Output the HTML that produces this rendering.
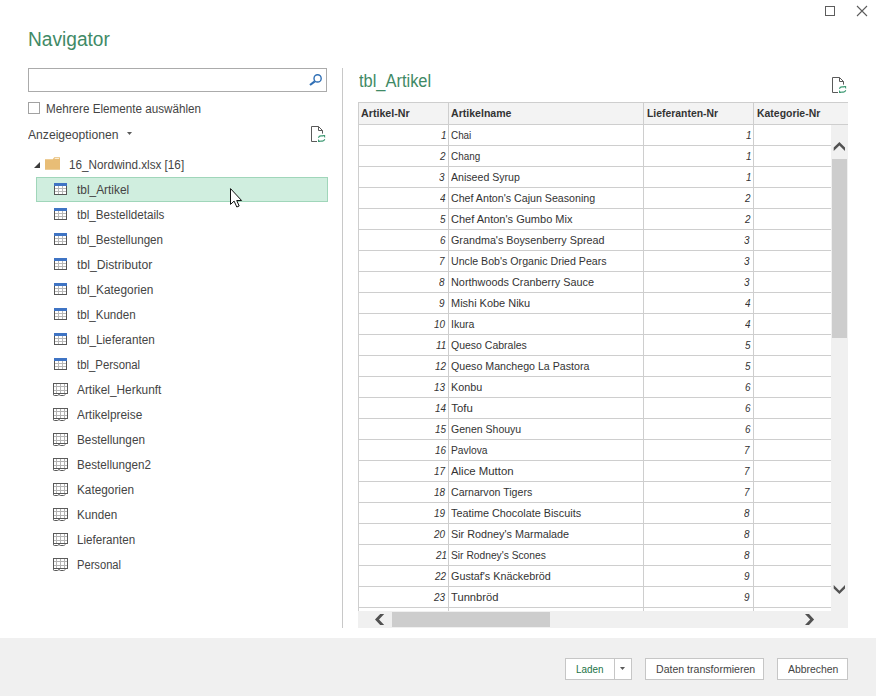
<!DOCTYPE html>
<html><head><meta charset="utf-8"><title>Navigator</title>
<style>
html,body{margin:0;padding:0;}
body{width:876px;height:696px;position:relative;overflow:hidden;background:#fff;font-family:"Liberation Sans",sans-serif;}
.t{position:absolute;white-space:nowrap;line-height:1;display:block;}
.b{position:absolute;box-sizing:border-box;}
svg{position:absolute;overflow:visible;}
</style></head>
<body>
<div class="b" style="left:0;top:638px;width:876px;height:58px;background:#f0f0f0;"></div>
<div class="b" style="left:825px;top:6px;width:10px;height:10px;border:1px solid #5c5c5c;"></div>
<svg style="left:857px;top:6px;" width="10" height="10"><path d="M0,0 L10,10 M10,0 L0,10" stroke="#5c5c5c" stroke-width="1.1" fill="none"/></svg>
<div class="b" style="left:28px;top:68px;width:299px;height:24px;border:1px solid #ababab;background:#fff;"></div>
<svg style="left:305px;top:72px;" width="20" height="18"><circle cx="12.6" cy="6.4" r="3.6" stroke="#2f6fb5" stroke-width="1.4" fill="none"/><path d="M9.8,9.3 L5.0,13.0" stroke="#2f6fb5" stroke-width="2.2" fill="none"/></svg>
<div class="b" style="left:28px;top:102px;width:12px;height:12px;border:1px solid #a2a2a2;background:#fff;"></div>
<svg style="left:127px;top:132px;" width="5" height="3"><path d="M0,0 L5,0 L2.5,3 Z" fill="#5a5a5a"/></svg>
<svg style="left:311px;top:126px;" width="16" height="18"><path d="M6,15.5 L0.5,15.5 L0.5,0.5 L7.5,0.5 L11.5,4.5 L11.5,7.6 M7.5,0.5 L7.5,4.5 L11.5,4.5" stroke="#5a5a5a" stroke-width="1" fill="none"/><path d="M7.4,11.7 Q8.0,10.0 9.8,9.9 L12.0,9.9" stroke="#3f9a74" stroke-width="1.1" fill="none"/><path d="M11.3,8.9 L14.1,8.9 L14.1,11.9 Z" fill="#3f9a74"/><path d="M13.8,13.3 Q13.2,15.0 11.4,15.1 L9.2,15.1" stroke="#3f9a74" stroke-width="1.1" fill="none"/><path d="M7.0,13.1 L7.0,16.0 L9.9,16.0 Z" fill="#3f9a74"/></svg>
<svg style="left:832px;top:77px;" width="16" height="18"><path d="M6,15.5 L0.5,15.5 L0.5,0.5 L7.5,0.5 L11.5,4.5 L11.5,7.6 M7.5,0.5 L7.5,4.5 L11.5,4.5" stroke="#5a5a5a" stroke-width="1" fill="none"/><path d="M7.4,11.7 Q8.0,10.0 9.8,9.9 L12.0,9.9" stroke="#3f9a74" stroke-width="1.1" fill="none"/><path d="M11.3,8.9 L14.1,8.9 L14.1,11.9 Z" fill="#3f9a74"/><path d="M13.8,13.3 Q13.2,15.0 11.4,15.1 L9.2,15.1" stroke="#3f9a74" stroke-width="1.1" fill="none"/><path d="M7.0,13.1 L7.0,16.0 L9.9,16.0 Z" fill="#3f9a74"/></svg>
<div class="b" style="left:342px;top:68px;width:1px;height:560px;background:#c8c8c8;"></div>
<svg style="left:34px;top:162px;" width="6" height="6"><path d="M6,0 L6,6 L0,6 Z" fill="#3c3c3c"/></svg>
<svg style="left:45px;top:157px;" width="16" height="14"><path d="M0,2.3 L7.8,2.3 L9.2,0.2 L14.6,0.2 L15,0.6 L15,12.8 L0,12.8 Z" fill="#e8bd76"/><rect x="9.7" y="1.0" width="4.4" height="0.9" fill="#fdf3df"/></svg>
<div class="b" style="left:36px;top:177px;width:292px;height:25px;background:#d0eedf;border:1px solid #a0d6ba;"></div>
<svg style="left:54px;top:183.0px;" width="13" height="12" shape-rendering="crispEdges"><rect x="0" y="0" width="13" height="12" fill="#b8b8b8"/><rect x="1" y="3" width="3" height="2" fill="#fff"/><rect x="5" y="3" width="3" height="2" fill="#fff"/><rect x="9" y="3" width="3" height="2" fill="#fff"/><rect x="1" y="6" width="3" height="2" fill="#fff"/><rect x="5" y="6" width="3" height="2" fill="#fff"/><rect x="9" y="6" width="3" height="2" fill="#fff"/><rect x="1" y="9" width="3" height="2" fill="#fff"/><rect x="5" y="9" width="3" height="2" fill="#fff"/><rect x="9" y="9" width="3" height="2" fill="#fff"/><rect x="0" y="0" width="13" height="3" fill="#3f74c4"/><rect x="0" y="3" width="1" height="9" fill="#565656"/><rect x="12" y="3" width="1" height="9" fill="#565656"/><rect x="0" y="11" width="13" height="1" fill="#565656"/></svg>
<svg style="left:54px;top:208.0px;" width="13" height="12" shape-rendering="crispEdges"><rect x="0" y="0" width="13" height="12" fill="#b8b8b8"/><rect x="1" y="3" width="3" height="2" fill="#fff"/><rect x="5" y="3" width="3" height="2" fill="#fff"/><rect x="9" y="3" width="3" height="2" fill="#fff"/><rect x="1" y="6" width="3" height="2" fill="#fff"/><rect x="5" y="6" width="3" height="2" fill="#fff"/><rect x="9" y="6" width="3" height="2" fill="#fff"/><rect x="1" y="9" width="3" height="2" fill="#fff"/><rect x="5" y="9" width="3" height="2" fill="#fff"/><rect x="9" y="9" width="3" height="2" fill="#fff"/><rect x="0" y="0" width="13" height="3" fill="#3f74c4"/><rect x="0" y="3" width="1" height="9" fill="#565656"/><rect x="12" y="3" width="1" height="9" fill="#565656"/><rect x="0" y="11" width="13" height="1" fill="#565656"/></svg>
<svg style="left:54px;top:233.0px;" width="13" height="12" shape-rendering="crispEdges"><rect x="0" y="0" width="13" height="12" fill="#b8b8b8"/><rect x="1" y="3" width="3" height="2" fill="#fff"/><rect x="5" y="3" width="3" height="2" fill="#fff"/><rect x="9" y="3" width="3" height="2" fill="#fff"/><rect x="1" y="6" width="3" height="2" fill="#fff"/><rect x="5" y="6" width="3" height="2" fill="#fff"/><rect x="9" y="6" width="3" height="2" fill="#fff"/><rect x="1" y="9" width="3" height="2" fill="#fff"/><rect x="5" y="9" width="3" height="2" fill="#fff"/><rect x="9" y="9" width="3" height="2" fill="#fff"/><rect x="0" y="0" width="13" height="3" fill="#3f74c4"/><rect x="0" y="3" width="1" height="9" fill="#565656"/><rect x="12" y="3" width="1" height="9" fill="#565656"/><rect x="0" y="11" width="13" height="1" fill="#565656"/></svg>
<svg style="left:54px;top:258.0px;" width="13" height="12" shape-rendering="crispEdges"><rect x="0" y="0" width="13" height="12" fill="#b8b8b8"/><rect x="1" y="3" width="3" height="2" fill="#fff"/><rect x="5" y="3" width="3" height="2" fill="#fff"/><rect x="9" y="3" width="3" height="2" fill="#fff"/><rect x="1" y="6" width="3" height="2" fill="#fff"/><rect x="5" y="6" width="3" height="2" fill="#fff"/><rect x="9" y="6" width="3" height="2" fill="#fff"/><rect x="1" y="9" width="3" height="2" fill="#fff"/><rect x="5" y="9" width="3" height="2" fill="#fff"/><rect x="9" y="9" width="3" height="2" fill="#fff"/><rect x="0" y="0" width="13" height="3" fill="#3f74c4"/><rect x="0" y="3" width="1" height="9" fill="#565656"/><rect x="12" y="3" width="1" height="9" fill="#565656"/><rect x="0" y="11" width="13" height="1" fill="#565656"/></svg>
<svg style="left:54px;top:283.0px;" width="13" height="12" shape-rendering="crispEdges"><rect x="0" y="0" width="13" height="12" fill="#b8b8b8"/><rect x="1" y="3" width="3" height="2" fill="#fff"/><rect x="5" y="3" width="3" height="2" fill="#fff"/><rect x="9" y="3" width="3" height="2" fill="#fff"/><rect x="1" y="6" width="3" height="2" fill="#fff"/><rect x="5" y="6" width="3" height="2" fill="#fff"/><rect x="9" y="6" width="3" height="2" fill="#fff"/><rect x="1" y="9" width="3" height="2" fill="#fff"/><rect x="5" y="9" width="3" height="2" fill="#fff"/><rect x="9" y="9" width="3" height="2" fill="#fff"/><rect x="0" y="0" width="13" height="3" fill="#3f74c4"/><rect x="0" y="3" width="1" height="9" fill="#565656"/><rect x="12" y="3" width="1" height="9" fill="#565656"/><rect x="0" y="11" width="13" height="1" fill="#565656"/></svg>
<svg style="left:54px;top:308.0px;" width="13" height="12" shape-rendering="crispEdges"><rect x="0" y="0" width="13" height="12" fill="#b8b8b8"/><rect x="1" y="3" width="3" height="2" fill="#fff"/><rect x="5" y="3" width="3" height="2" fill="#fff"/><rect x="9" y="3" width="3" height="2" fill="#fff"/><rect x="1" y="6" width="3" height="2" fill="#fff"/><rect x="5" y="6" width="3" height="2" fill="#fff"/><rect x="9" y="6" width="3" height="2" fill="#fff"/><rect x="1" y="9" width="3" height="2" fill="#fff"/><rect x="5" y="9" width="3" height="2" fill="#fff"/><rect x="9" y="9" width="3" height="2" fill="#fff"/><rect x="0" y="0" width="13" height="3" fill="#3f74c4"/><rect x="0" y="3" width="1" height="9" fill="#565656"/><rect x="12" y="3" width="1" height="9" fill="#565656"/><rect x="0" y="11" width="13" height="1" fill="#565656"/></svg>
<svg style="left:54px;top:333.0px;" width="13" height="12" shape-rendering="crispEdges"><rect x="0" y="0" width="13" height="12" fill="#b8b8b8"/><rect x="1" y="3" width="3" height="2" fill="#fff"/><rect x="5" y="3" width="3" height="2" fill="#fff"/><rect x="9" y="3" width="3" height="2" fill="#fff"/><rect x="1" y="6" width="3" height="2" fill="#fff"/><rect x="5" y="6" width="3" height="2" fill="#fff"/><rect x="9" y="6" width="3" height="2" fill="#fff"/><rect x="1" y="9" width="3" height="2" fill="#fff"/><rect x="5" y="9" width="3" height="2" fill="#fff"/><rect x="9" y="9" width="3" height="2" fill="#fff"/><rect x="0" y="0" width="13" height="3" fill="#3f74c4"/><rect x="0" y="3" width="1" height="9" fill="#565656"/><rect x="12" y="3" width="1" height="9" fill="#565656"/><rect x="0" y="11" width="13" height="1" fill="#565656"/></svg>
<svg style="left:54px;top:358.0px;" width="13" height="12" shape-rendering="crispEdges"><rect x="0" y="0" width="13" height="12" fill="#b8b8b8"/><rect x="1" y="3" width="3" height="2" fill="#fff"/><rect x="5" y="3" width="3" height="2" fill="#fff"/><rect x="9" y="3" width="3" height="2" fill="#fff"/><rect x="1" y="6" width="3" height="2" fill="#fff"/><rect x="5" y="6" width="3" height="2" fill="#fff"/><rect x="9" y="6" width="3" height="2" fill="#fff"/><rect x="1" y="9" width="3" height="2" fill="#fff"/><rect x="5" y="9" width="3" height="2" fill="#fff"/><rect x="9" y="9" width="3" height="2" fill="#fff"/><rect x="0" y="0" width="13" height="3" fill="#3f74c4"/><rect x="0" y="3" width="1" height="9" fill="#565656"/><rect x="12" y="3" width="1" height="9" fill="#565656"/><rect x="0" y="11" width="13" height="1" fill="#565656"/></svg>
<svg style="left:53px;top:383.0px;" width="15" height="13"><g shape-rendering="crispEdges"><rect x="0" y="0" width="15" height="11" fill="#fff"/><rect x="3" y="1" width="1" height="9" fill="#b4b4b4"/><rect x="7" y="1" width="1" height="9" fill="#b4b4b4"/><rect x="11" y="1" width="1" height="9" fill="#b4b4b4"/><rect x="1" y="3" width="13" height="1" fill="#b4b4b4"/><rect x="1" y="7" width="13" height="1" fill="#b4b4b4"/><rect x="0" y="0" width="15" height="1" fill="#5a5a5a"/><rect x="0" y="10" width="15" height="1" fill="#5a5a5a"/><rect x="0" y="0" width="1" height="11" fill="#5a5a5a"/><rect x="14" y="0" width="1" height="11" fill="#5a5a5a"/></g><path d="M0.5,11 L0.5,11.8 Q0.5,12.5 1.4,12.5 L4.6,12.5 Q5.6,12.5 6.0,11.2 Q6.4,12.5 7.4,12.5 L10.6,12.5 Q11.3,12.5 12.6,11.1" stroke="#5a5a5a" stroke-width="1" fill="none"/></svg>
<svg style="left:53px;top:408.0px;" width="15" height="13"><g shape-rendering="crispEdges"><rect x="0" y="0" width="15" height="11" fill="#fff"/><rect x="3" y="1" width="1" height="9" fill="#b4b4b4"/><rect x="7" y="1" width="1" height="9" fill="#b4b4b4"/><rect x="11" y="1" width="1" height="9" fill="#b4b4b4"/><rect x="1" y="3" width="13" height="1" fill="#b4b4b4"/><rect x="1" y="7" width="13" height="1" fill="#b4b4b4"/><rect x="0" y="0" width="15" height="1" fill="#5a5a5a"/><rect x="0" y="10" width="15" height="1" fill="#5a5a5a"/><rect x="0" y="0" width="1" height="11" fill="#5a5a5a"/><rect x="14" y="0" width="1" height="11" fill="#5a5a5a"/></g><path d="M0.5,11 L0.5,11.8 Q0.5,12.5 1.4,12.5 L4.6,12.5 Q5.6,12.5 6.0,11.2 Q6.4,12.5 7.4,12.5 L10.6,12.5 Q11.3,12.5 12.6,11.1" stroke="#5a5a5a" stroke-width="1" fill="none"/></svg>
<svg style="left:53px;top:433.0px;" width="15" height="13"><g shape-rendering="crispEdges"><rect x="0" y="0" width="15" height="11" fill="#fff"/><rect x="3" y="1" width="1" height="9" fill="#b4b4b4"/><rect x="7" y="1" width="1" height="9" fill="#b4b4b4"/><rect x="11" y="1" width="1" height="9" fill="#b4b4b4"/><rect x="1" y="3" width="13" height="1" fill="#b4b4b4"/><rect x="1" y="7" width="13" height="1" fill="#b4b4b4"/><rect x="0" y="0" width="15" height="1" fill="#5a5a5a"/><rect x="0" y="10" width="15" height="1" fill="#5a5a5a"/><rect x="0" y="0" width="1" height="11" fill="#5a5a5a"/><rect x="14" y="0" width="1" height="11" fill="#5a5a5a"/></g><path d="M0.5,11 L0.5,11.8 Q0.5,12.5 1.4,12.5 L4.6,12.5 Q5.6,12.5 6.0,11.2 Q6.4,12.5 7.4,12.5 L10.6,12.5 Q11.3,12.5 12.6,11.1" stroke="#5a5a5a" stroke-width="1" fill="none"/></svg>
<svg style="left:53px;top:458.0px;" width="15" height="13"><g shape-rendering="crispEdges"><rect x="0" y="0" width="15" height="11" fill="#fff"/><rect x="3" y="1" width="1" height="9" fill="#b4b4b4"/><rect x="7" y="1" width="1" height="9" fill="#b4b4b4"/><rect x="11" y="1" width="1" height="9" fill="#b4b4b4"/><rect x="1" y="3" width="13" height="1" fill="#b4b4b4"/><rect x="1" y="7" width="13" height="1" fill="#b4b4b4"/><rect x="0" y="0" width="15" height="1" fill="#5a5a5a"/><rect x="0" y="10" width="15" height="1" fill="#5a5a5a"/><rect x="0" y="0" width="1" height="11" fill="#5a5a5a"/><rect x="14" y="0" width="1" height="11" fill="#5a5a5a"/></g><path d="M0.5,11 L0.5,11.8 Q0.5,12.5 1.4,12.5 L4.6,12.5 Q5.6,12.5 6.0,11.2 Q6.4,12.5 7.4,12.5 L10.6,12.5 Q11.3,12.5 12.6,11.1" stroke="#5a5a5a" stroke-width="1" fill="none"/></svg>
<svg style="left:53px;top:483.0px;" width="15" height="13"><g shape-rendering="crispEdges"><rect x="0" y="0" width="15" height="11" fill="#fff"/><rect x="3" y="1" width="1" height="9" fill="#b4b4b4"/><rect x="7" y="1" width="1" height="9" fill="#b4b4b4"/><rect x="11" y="1" width="1" height="9" fill="#b4b4b4"/><rect x="1" y="3" width="13" height="1" fill="#b4b4b4"/><rect x="1" y="7" width="13" height="1" fill="#b4b4b4"/><rect x="0" y="0" width="15" height="1" fill="#5a5a5a"/><rect x="0" y="10" width="15" height="1" fill="#5a5a5a"/><rect x="0" y="0" width="1" height="11" fill="#5a5a5a"/><rect x="14" y="0" width="1" height="11" fill="#5a5a5a"/></g><path d="M0.5,11 L0.5,11.8 Q0.5,12.5 1.4,12.5 L4.6,12.5 Q5.6,12.5 6.0,11.2 Q6.4,12.5 7.4,12.5 L10.6,12.5 Q11.3,12.5 12.6,11.1" stroke="#5a5a5a" stroke-width="1" fill="none"/></svg>
<svg style="left:53px;top:508.0px;" width="15" height="13"><g shape-rendering="crispEdges"><rect x="0" y="0" width="15" height="11" fill="#fff"/><rect x="3" y="1" width="1" height="9" fill="#b4b4b4"/><rect x="7" y="1" width="1" height="9" fill="#b4b4b4"/><rect x="11" y="1" width="1" height="9" fill="#b4b4b4"/><rect x="1" y="3" width="13" height="1" fill="#b4b4b4"/><rect x="1" y="7" width="13" height="1" fill="#b4b4b4"/><rect x="0" y="0" width="15" height="1" fill="#5a5a5a"/><rect x="0" y="10" width="15" height="1" fill="#5a5a5a"/><rect x="0" y="0" width="1" height="11" fill="#5a5a5a"/><rect x="14" y="0" width="1" height="11" fill="#5a5a5a"/></g><path d="M0.5,11 L0.5,11.8 Q0.5,12.5 1.4,12.5 L4.6,12.5 Q5.6,12.5 6.0,11.2 Q6.4,12.5 7.4,12.5 L10.6,12.5 Q11.3,12.5 12.6,11.1" stroke="#5a5a5a" stroke-width="1" fill="none"/></svg>
<svg style="left:53px;top:533.0px;" width="15" height="13"><g shape-rendering="crispEdges"><rect x="0" y="0" width="15" height="11" fill="#fff"/><rect x="3" y="1" width="1" height="9" fill="#b4b4b4"/><rect x="7" y="1" width="1" height="9" fill="#b4b4b4"/><rect x="11" y="1" width="1" height="9" fill="#b4b4b4"/><rect x="1" y="3" width="13" height="1" fill="#b4b4b4"/><rect x="1" y="7" width="13" height="1" fill="#b4b4b4"/><rect x="0" y="0" width="15" height="1" fill="#5a5a5a"/><rect x="0" y="10" width="15" height="1" fill="#5a5a5a"/><rect x="0" y="0" width="1" height="11" fill="#5a5a5a"/><rect x="14" y="0" width="1" height="11" fill="#5a5a5a"/></g><path d="M0.5,11 L0.5,11.8 Q0.5,12.5 1.4,12.5 L4.6,12.5 Q5.6,12.5 6.0,11.2 Q6.4,12.5 7.4,12.5 L10.6,12.5 Q11.3,12.5 12.6,11.1" stroke="#5a5a5a" stroke-width="1" fill="none"/></svg>
<svg style="left:53px;top:558.0px;" width="15" height="13"><g shape-rendering="crispEdges"><rect x="0" y="0" width="15" height="11" fill="#fff"/><rect x="3" y="1" width="1" height="9" fill="#b4b4b4"/><rect x="7" y="1" width="1" height="9" fill="#b4b4b4"/><rect x="11" y="1" width="1" height="9" fill="#b4b4b4"/><rect x="1" y="3" width="13" height="1" fill="#b4b4b4"/><rect x="1" y="7" width="13" height="1" fill="#b4b4b4"/><rect x="0" y="0" width="15" height="1" fill="#5a5a5a"/><rect x="0" y="10" width="15" height="1" fill="#5a5a5a"/><rect x="0" y="0" width="1" height="11" fill="#5a5a5a"/><rect x="14" y="0" width="1" height="11" fill="#5a5a5a"/></g><path d="M0.5,11 L0.5,11.8 Q0.5,12.5 1.4,12.5 L4.6,12.5 Q5.6,12.5 6.0,11.2 Q6.4,12.5 7.4,12.5 L10.6,12.5 Q11.3,12.5 12.6,11.1" stroke="#5a5a5a" stroke-width="1" fill="none"/></svg>
<div class="b" style="left:358px;top:102px;width:490px;height:23px;background:#f3f3f3;border-top:1px solid #cecece;border-bottom:1px solid #cecece;"></div>
<div class="b" style="left:358px;top:102px;width:1px;height:509px;background:#cecece;"></div>
<div class="b" style="left:358px;top:145px;width:474px;height:1px;background:#cecece;"></div>
<div class="b" style="left:358px;top:166px;width:474px;height:1px;background:#cecece;"></div>
<div class="b" style="left:358px;top:187px;width:474px;height:1px;background:#cecece;"></div>
<div class="b" style="left:358px;top:208px;width:474px;height:1px;background:#cecece;"></div>
<div class="b" style="left:358px;top:229px;width:474px;height:1px;background:#cecece;"></div>
<div class="b" style="left:358px;top:250px;width:474px;height:1px;background:#cecece;"></div>
<div class="b" style="left:358px;top:271px;width:474px;height:1px;background:#cecece;"></div>
<div class="b" style="left:358px;top:292px;width:474px;height:1px;background:#cecece;"></div>
<div class="b" style="left:358px;top:313px;width:474px;height:1px;background:#cecece;"></div>
<div class="b" style="left:358px;top:334px;width:474px;height:1px;background:#cecece;"></div>
<div class="b" style="left:358px;top:355px;width:474px;height:1px;background:#cecece;"></div>
<div class="b" style="left:358px;top:376px;width:474px;height:1px;background:#cecece;"></div>
<div class="b" style="left:358px;top:397px;width:474px;height:1px;background:#cecece;"></div>
<div class="b" style="left:358px;top:418px;width:474px;height:1px;background:#cecece;"></div>
<div class="b" style="left:358px;top:439px;width:474px;height:1px;background:#cecece;"></div>
<div class="b" style="left:358px;top:460px;width:474px;height:1px;background:#cecece;"></div>
<div class="b" style="left:358px;top:481px;width:474px;height:1px;background:#cecece;"></div>
<div class="b" style="left:358px;top:502px;width:474px;height:1px;background:#cecece;"></div>
<div class="b" style="left:358px;top:523px;width:474px;height:1px;background:#cecece;"></div>
<div class="b" style="left:358px;top:544px;width:474px;height:1px;background:#cecece;"></div>
<div class="b" style="left:358px;top:565px;width:474px;height:1px;background:#cecece;"></div>
<div class="b" style="left:358px;top:586px;width:474px;height:1px;background:#cecece;"></div>
<div class="b" style="left:358px;top:607px;width:474px;height:1px;background:#cecece;"></div>
<div class="b" style="left:448px;top:102px;width:1px;height:509px;background:#cecece;"></div>
<div class="b" style="left:643px;top:102px;width:1px;height:509px;background:#cecece;"></div>
<div class="b" style="left:753px;top:102px;width:1px;height:509px;background:#cecece;"></div>
<div class="b" style="left:831px;top:125px;width:17px;height:503px;background:#f0f0f0;"></div>
<div class="b" style="left:832px;top:159px;width:15px;height:179px;background:#cdcdcd;"></div>
<div class="b" style="left:358px;top:611px;width:490px;height:17px;background:#f0f0f0;"></div>
<div class="b" style="left:392px;top:612px;width:158px;height:15px;background:#cdcdcd;"></div>
<svg style="left:0;top:0;" width="876" height="696"><path d="M833.7,147.5 L839.4,141.9 L845,147.5 L845,151 L839.4,145.4 L833.7,151 Z" fill="#525252"/><path d="M833.7,585 L839.4,590.7 L845,585 L845,588.5 L839.4,594.1 L833.7,588.5 Z" fill="#525252"/><path d="M384.2,614 L380.2,614 L375,619.4 L380.2,625 L384.2,625 L379,619.4 Z" fill="#525252"/><path d="M805,614 L809,614 L814.1,619.4 L809,625 L805,625 L810.2,619.4 Z" fill="#525252"/></svg>
<div class="b" style="left:565px;top:658px;width:67px;height:22px;background:#fff;border:1px solid #c6c6c6;"></div>
<div class="b" style="left:614px;top:658px;width:1px;height:22px;background:#c6c6c6;"></div>
<svg style="left:620px;top:667px;" width="5" height="3"><path d="M0,0 L5,0 L2.5,3 Z" fill="#5a5a5a"/></svg>
<div class="b" style="left:645px;top:658px;width:119px;height:22px;background:#fff;border:1px solid #c6c6c6;"></div>
<div class="b" style="left:777px;top:658px;width:71px;height:22px;background:#fff;border:1px solid #c6c6c6;"></div>
<span class="t" style="top:29.17px;font-size:20px;color:#3f8a66;left:27.54px;transform-origin:0 0;transform:scaleX(0.9565);">Navigator</span>
<span class="t" style="top:103.14px;font-size:12px;color:#444444;left:45.80px;transform-origin:0 0;transform:scaleX(0.9723);">Mehrere Elemente auswählen</span>
<span class="t" style="top:129.24px;font-size:12px;color:#444444;left:28.20px;transform-origin:0 0;transform:scaleX(1.0112);">Anzeigeoptionen</span>
<span class="t" style="top:158.54px;font-size:12px;color:#444444;left:68.82px;transform-origin:0 0;transform:scaleX(0.9752);">16_Nordwind.xlsx [16]</span>
<span class="t" style="top:183.54px;font-size:12px;color:#444444;left:77.30px;transform-origin:0 0;transform:scaleX(0.9906);">tbl_Artikel</span>
<span class="t" style="top:208.54px;font-size:12px;color:#444444;left:77.30px;transform-origin:0 0;transform:scaleX(0.9711);">tbl_Bestelldetails</span>
<span class="t" style="top:233.54px;font-size:12px;color:#444444;left:77.30px;transform-origin:0 0;transform:scaleX(0.9697);">tbl_Bestellungen</span>
<span class="t" style="top:258.54px;font-size:12px;color:#444444;left:77.30px;transform-origin:0 0;transform:scaleX(1.0176);">tbl_Distributor</span>
<span class="t" style="top:283.54px;font-size:12px;color:#444444;left:77.30px;transform-origin:0 0;transform:scaleX(0.9870);">tbl_Kategorien</span>
<span class="t" style="top:308.54px;font-size:12px;color:#444444;left:77.30px;transform-origin:0 0;transform:scaleX(0.9656);">tbl_Kunden</span>
<span class="t" style="top:333.54px;font-size:12px;color:#444444;left:77.30px;transform-origin:0 0;transform:scaleX(0.9797);">tbl_Lieferanten</span>
<span class="t" style="top:358.54px;font-size:12px;color:#444444;left:77.30px;transform-origin:0 0;transform:scaleX(0.9463);">tbl_Personal</span>
<span class="t" style="top:383.54px;font-size:12px;color:#444444;left:77.30px;transform-origin:0 0;transform:scaleX(0.9884);">Artikel_Herkunft</span>
<span class="t" style="top:408.54px;font-size:12px;color:#444444;left:77.30px;transform-origin:0 0;transform:scaleX(0.9879);">Artikelpreise</span>
<span class="t" style="top:433.54px;font-size:12px;color:#444444;left:77.30px;transform-origin:0 0;transform:scaleX(0.9797);">Bestellungen</span>
<span class="t" style="top:458.54px;font-size:12px;color:#444444;left:77.30px;transform-origin:0 0;transform:scaleX(0.9711);">Bestellungen2</span>
<span class="t" style="top:483.54px;font-size:12px;color:#444444;left:77.30px;transform-origin:0 0;transform:scaleX(0.9828);">Kategorien</span>
<span class="t" style="top:508.54px;font-size:12px;color:#444444;left:77.30px;transform-origin:0 0;transform:scaleX(0.9732);">Kunden</span>
<span class="t" style="top:533.54px;font-size:12px;color:#444444;left:77.30px;transform-origin:0 0;transform:scaleX(0.9683);">Lieferanten</span>
<span class="t" style="top:558.54px;font-size:12px;color:#444444;left:77.30px;transform-origin:0 0;transform:scaleX(0.9292);">Personal</span>
<span class="t" style="top:73.09px;font-size:17.5px;color:#3f8a66;left:358.70px;transform-origin:0 0;transform:scaleX(0.9390);">tbl_Artikel</span>
<span class="t" style="top:107.69px;font-size:11px;color:#333333;font-weight:bold;left:361.20px;transform-origin:0 0;transform:scaleX(0.9720);">Artikel-Nr</span>
<span class="t" style="top:107.69px;font-size:11px;color:#333333;font-weight:bold;left:451.10px;transform-origin:0 0;transform:scaleX(0.9603);">Artikelname</span>
<span class="t" style="top:107.69px;font-size:11px;color:#333333;font-weight:bold;left:646.60px;transform-origin:0 0;transform:scaleX(0.9447);">Lieferanten-Nr</span>
<span class="t" style="top:107.69px;font-size:11px;color:#333333;font-weight:bold;left:756.60px;transform-origin:0 0;transform:scaleX(0.9493);">Kategorie-Nr</span>
<span class="t" style="top:129.65px;font-size:11.4px;color:#333333;left:451.30px;transform-origin:0 0;transform:scaleX(0.8667);">Chai</span>
<span class="t" style="top:129.99px;font-size:11px;color:#333333;font-style:italic;left:441.20px;transform-origin:0 0;transform:scaleX(0.9000);">1</span>
<span class="t" style="top:129.99px;font-size:11px;color:#333333;font-style:italic;left:746.20px;transform-origin:0 0;transform:scaleX(0.9000);">1</span>
<span class="t" style="top:150.65px;font-size:11.4px;color:#333333;left:451.30px;transform-origin:0 0;transform:scaleX(0.8676);">Chang</span>
<span class="t" style="top:150.99px;font-size:11px;color:#333333;font-style:italic;left:440.30px;transform-origin:0 0;transform:scaleX(0.9000);">2</span>
<span class="t" style="top:150.99px;font-size:11px;color:#333333;font-style:italic;left:746.20px;transform-origin:0 0;transform:scaleX(0.9000);">1</span>
<span class="t" style="top:171.65px;font-size:11.4px;color:#333333;left:451.30px;transform-origin:0 0;transform:scaleX(0.9297);">Aniseed Syrup</span>
<span class="t" style="top:171.99px;font-size:11px;color:#333333;font-style:italic;left:439.40px;transform-origin:0 0;transform:scaleX(0.9000);">3</span>
<span class="t" style="top:171.99px;font-size:11px;color:#333333;font-style:italic;left:746.20px;transform-origin:0 0;transform:scaleX(0.9000);">1</span>
<span class="t" style="top:192.65px;font-size:11.4px;color:#333333;left:451.30px;transform-origin:0 0;transform:scaleX(0.9351);">Chef Anton's Cajun Seasoning</span>
<span class="t" style="top:192.99px;font-size:11px;color:#333333;font-style:italic;left:440.30px;transform-origin:0 0;transform:scaleX(0.9000);">4</span>
<span class="t" style="top:192.99px;font-size:11px;color:#333333;font-style:italic;left:745.30px;transform-origin:0 0;transform:scaleX(0.9000);">2</span>
<span class="t" style="top:213.65px;font-size:11.4px;color:#333333;left:451.30px;transform-origin:0 0;transform:scaleX(0.9667);">Chef Anton's Gumbo Mix</span>
<span class="t" style="top:213.99px;font-size:11px;color:#333333;font-style:italic;left:440.30px;transform-origin:0 0;transform:scaleX(0.9000);">5</span>
<span class="t" style="top:213.99px;font-size:11px;color:#333333;font-style:italic;left:745.30px;transform-origin:0 0;transform:scaleX(0.9000);">2</span>
<span class="t" style="top:234.65px;font-size:11.4px;color:#333333;left:451.30px;transform-origin:0 0;transform:scaleX(0.9451);">Grandma's Boysenberry Spread</span>
<span class="t" style="top:234.99px;font-size:11px;color:#333333;font-style:italic;left:440.30px;transform-origin:0 0;transform:scaleX(0.9000);">6</span>
<span class="t" style="top:234.99px;font-size:11px;color:#333333;font-style:italic;left:744.40px;transform-origin:0 0;transform:scaleX(0.9000);">3</span>
<span class="t" style="top:255.65px;font-size:11.4px;color:#333333;left:451.30px;transform-origin:0 0;transform:scaleX(0.9329);">Uncle Bob's Organic Dried Pears</span>
<span class="t" style="top:255.99px;font-size:11px;color:#333333;font-style:italic;left:439.40px;transform-origin:0 0;transform:scaleX(0.9000);">7</span>
<span class="t" style="top:255.99px;font-size:11px;color:#333333;font-style:italic;left:744.40px;transform-origin:0 0;transform:scaleX(0.9000);">3</span>
<span class="t" style="top:276.65px;font-size:11.4px;color:#333333;left:451.30px;transform-origin:0 0;transform:scaleX(0.9533);">Northwoods Cranberry Sauce</span>
<span class="t" style="top:276.99px;font-size:11px;color:#333333;font-style:italic;left:439.40px;transform-origin:0 0;transform:scaleX(0.9000);">8</span>
<span class="t" style="top:276.99px;font-size:11px;color:#333333;font-style:italic;left:744.40px;transform-origin:0 0;transform:scaleX(0.9000);">3</span>
<span class="t" style="top:297.65px;font-size:11.4px;color:#333333;left:451.30px;transform-origin:0 0;transform:scaleX(0.9622);">Mishi Kobe Niku</span>
<span class="t" style="top:297.99px;font-size:11px;color:#333333;font-style:italic;left:439.40px;transform-origin:0 0;transform:scaleX(0.9000);">9</span>
<span class="t" style="top:297.99px;font-size:11px;color:#333333;font-style:italic;left:745.30px;transform-origin:0 0;transform:scaleX(0.9000);">4</span>
<span class="t" style="top:318.65px;font-size:11.4px;color:#333333;left:451.30px;transform-origin:0 0;transform:scaleX(0.9269);">Ikura</span>
<span class="t" style="top:318.99px;font-size:11px;color:#333333;font-style:italic;left:434.00px;transform-origin:0 0;transform:scaleX(0.9000);">10</span>
<span class="t" style="top:318.99px;font-size:11px;color:#333333;font-style:italic;left:745.30px;transform-origin:0 0;transform:scaleX(0.9000);">4</span>
<span class="t" style="top:339.65px;font-size:11.4px;color:#333333;left:451.30px;transform-origin:0 0;transform:scaleX(0.9207);">Queso Cabrales</span>
<span class="t" style="top:339.99px;font-size:11px;color:#333333;font-style:italic;left:435.80px;transform-origin:0 0;transform:scaleX(0.9000);">11</span>
<span class="t" style="top:339.99px;font-size:11px;color:#333333;font-style:italic;left:745.30px;transform-origin:0 0;transform:scaleX(0.9000);">5</span>
<span class="t" style="top:360.65px;font-size:11.4px;color:#333333;left:451.30px;transform-origin:0 0;transform:scaleX(0.9338);">Queso Manchego La Pastora</span>
<span class="t" style="top:360.99px;font-size:11px;color:#333333;font-style:italic;left:434.90px;transform-origin:0 0;transform:scaleX(0.9000);">12</span>
<span class="t" style="top:360.99px;font-size:11px;color:#333333;font-style:italic;left:745.30px;transform-origin:0 0;transform:scaleX(0.9000);">5</span>
<span class="t" style="top:381.65px;font-size:11.4px;color:#333333;left:451.30px;transform-origin:0 0;transform:scaleX(0.9455);">Konbu</span>
<span class="t" style="top:381.99px;font-size:11px;color:#333333;font-style:italic;left:434.00px;transform-origin:0 0;transform:scaleX(0.9000);">13</span>
<span class="t" style="top:381.99px;font-size:11px;color:#333333;font-style:italic;left:745.30px;transform-origin:0 0;transform:scaleX(0.9000);">6</span>
<span class="t" style="top:402.65px;font-size:11.4px;color:#333333;left:451.30px;transform-origin:0 0;">Tofu</span>
<span class="t" style="top:402.99px;font-size:11px;color:#333333;font-style:italic;left:434.90px;transform-origin:0 0;transform:scaleX(0.9000);">14</span>
<span class="t" style="top:402.99px;font-size:11px;color:#333333;font-style:italic;left:745.30px;transform-origin:0 0;transform:scaleX(0.9000);">6</span>
<span class="t" style="top:423.65px;font-size:11.4px;color:#333333;left:451.30px;transform-origin:0 0;transform:scaleX(0.9237);">Genen Shouyu</span>
<span class="t" style="top:423.99px;font-size:11px;color:#333333;font-style:italic;left:434.90px;transform-origin:0 0;transform:scaleX(0.9000);">15</span>
<span class="t" style="top:423.99px;font-size:11px;color:#333333;font-style:italic;left:745.30px;transform-origin:0 0;transform:scaleX(0.9000);">6</span>
<span class="t" style="top:444.65px;font-size:11.4px;color:#333333;left:451.30px;transform-origin:0 0;transform:scaleX(0.9024);">Pavlova</span>
<span class="t" style="top:444.99px;font-size:11px;color:#333333;font-style:italic;left:434.90px;transform-origin:0 0;transform:scaleX(0.9000);">16</span>
<span class="t" style="top:444.99px;font-size:11px;color:#333333;font-style:italic;left:744.40px;transform-origin:0 0;transform:scaleX(0.9000);">7</span>
<span class="t" style="top:465.65px;font-size:11.4px;color:#333333;left:451.30px;transform-origin:0 0;transform:scaleX(0.9984);">Alice Mutton</span>
<span class="t" style="top:465.99px;font-size:11px;color:#333333;font-style:italic;left:434.00px;transform-origin:0 0;transform:scaleX(0.9000);">17</span>
<span class="t" style="top:465.99px;font-size:11px;color:#333333;font-style:italic;left:744.40px;transform-origin:0 0;transform:scaleX(0.9000);">7</span>
<span class="t" style="top:486.65px;font-size:11.4px;color:#333333;left:451.30px;transform-origin:0 0;transform:scaleX(0.9295);">Carnarvon Tigers</span>
<span class="t" style="top:486.99px;font-size:11px;color:#333333;font-style:italic;left:434.00px;transform-origin:0 0;transform:scaleX(0.9000);">18</span>
<span class="t" style="top:486.99px;font-size:11px;color:#333333;font-style:italic;left:744.40px;transform-origin:0 0;transform:scaleX(0.9000);">7</span>
<span class="t" style="top:507.65px;font-size:11.4px;color:#333333;left:451.30px;transform-origin:0 0;transform:scaleX(0.9511);">Teatime Chocolate Biscuits</span>
<span class="t" style="top:507.99px;font-size:11px;color:#333333;font-style:italic;left:434.00px;transform-origin:0 0;transform:scaleX(0.9000);">19</span>
<span class="t" style="top:507.99px;font-size:11px;color:#333333;font-style:italic;left:744.40px;transform-origin:0 0;transform:scaleX(0.9000);">8</span>
<span class="t" style="top:528.65px;font-size:11.4px;color:#333333;left:451.30px;transform-origin:0 0;transform:scaleX(0.9500);">Sir Rodney's Marmalade</span>
<span class="t" style="top:528.99px;font-size:11px;color:#333333;font-style:italic;left:434.00px;transform-origin:0 0;transform:scaleX(0.9000);">20</span>
<span class="t" style="top:528.99px;font-size:11px;color:#333333;font-style:italic;left:744.40px;transform-origin:0 0;transform:scaleX(0.9000);">8</span>
<span class="t" style="top:549.65px;font-size:11.4px;color:#333333;left:451.30px;transform-origin:0 0;transform:scaleX(0.9000);">Sir Rodney's Scones</span>
<span class="t" style="top:549.99px;font-size:11px;color:#333333;font-style:italic;left:435.80px;transform-origin:0 0;transform:scaleX(0.9000);">21</span>
<span class="t" style="top:549.99px;font-size:11px;color:#333333;font-style:italic;left:744.40px;transform-origin:0 0;transform:scaleX(0.9000);">8</span>
<span class="t" style="top:570.65px;font-size:11.4px;color:#333333;left:451.30px;transform-origin:0 0;transform:scaleX(0.9467);">Gustaf's Knäckebröd</span>
<span class="t" style="top:570.99px;font-size:11px;color:#333333;font-style:italic;left:434.90px;transform-origin:0 0;transform:scaleX(0.9000);">22</span>
<span class="t" style="top:570.99px;font-size:11px;color:#333333;font-style:italic;left:744.40px;transform-origin:0 0;transform:scaleX(0.9000);">9</span>
<span class="t" style="top:591.65px;font-size:11.4px;color:#333333;left:451.30px;transform-origin:0 0;transform:scaleX(0.9812);">Tunnbröd</span>
<span class="t" style="top:591.99px;font-size:11px;color:#333333;font-style:italic;left:434.00px;transform-origin:0 0;transform:scaleX(0.9000);">23</span>
<span class="t" style="top:591.99px;font-size:11px;color:#333333;font-style:italic;left:744.40px;transform-origin:0 0;transform:scaleX(0.9000);">9</span>
<span class="t" style="top:663.59px;font-size:11px;color:#217346;left:576.10px;transform-origin:0 0;transform:scaleX(0.8968);">Laden</span>
<span class="t" style="top:663.59px;font-size:11px;color:#444444;left:655.50px;transform-origin:0 0;transform:scaleX(0.9602);">Daten transformieren</span>
<span class="t" style="top:663.59px;font-size:11px;color:#444444;left:787.60px;transform-origin:0 0;transform:scaleX(0.9472);">Abbrechen</span>
<svg style="left:230px;top:188px;" width="13" height="20"><path d="M0.5,0.6 L0.5,16.4 L4.1,13.1 L6.8,19.0 L9.2,18.0 L6.7,12.5 L11.6,12.5 Z" fill="#fff" stroke="#111" stroke-width="1" stroke-linejoin="miter"/></svg>
</body></html>
